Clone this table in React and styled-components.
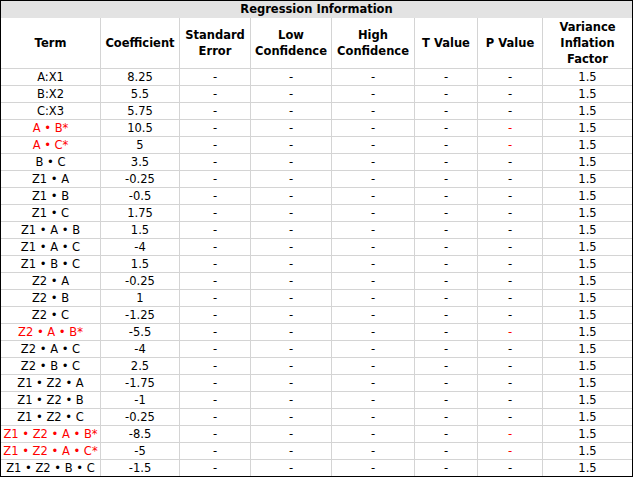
import React from 'react'
import styled, { createGlobalStyle } from 'styled-components'

const GlobalStyle = createGlobalStyle`
  body {
    margin: 0;
    background: #fff;
  }
`

const Frame = styled.div`
  width: 633px;
  height: 477px;
  box-sizing: border-box;
  border: 1px solid #000;
  background: #fff;
  font-family: 'DejaVu Sans', Tahoma, sans-serif;
  font-size: 11.5px;
  color: #000;
`

const Title = styled.div`
  height: 17px;
  line-height: 17px;
  background: #e3e3e3;
  text-align: center;
  font-weight: bold;
`

const Grid = styled.div`
  display: grid;
  grid-template-columns: 100px 79px 71px 81px 83px 63px 65px 89px;
  grid-template-rows: 51px repeat(23, 17px) 16px;
`

const Cell = styled.div`
  box-sizing: border-box;
  display: flex;
  align-items: center;
  justify-content: center;
  text-align: center;
  border-right: ${p => (p.$lastCol ? 'none' : '1px solid #d4d4d4')};
  border-bottom: ${p => (p.$lastRow ? 'none' : '1px solid #d4d4d4')};
  color: ${p => (p.$red ? '#ff0000' : '#000')};
  white-space: nowrap;
`

const HeadCell = styled(Cell)`
  font-weight: bold;
  line-height: 16px;
  white-space: normal;
`

const headers = [
  'Term',
  'Coefficient',
  'Standard\nError',
  'Low\nConfidence',
  'High\nConfidence',
  'T Value',
  'P Value',
  'Variance\nInflation\nFactor',
]

// [term, coefficient, significant]
const rows = [
  ['A:X1', '8.25'],
  ['B:X2', '5.5'],
  ['C:X3', '5.75'],
  ['A • B*', '10.5', true],
  ['A • C*', '5', true],
  ['B • C', '3.5'],
  ['Z1 • A', '-0.25'],
  ['Z1 • B', '-0.5'],
  ['Z1 • C', '1.75'],
  ['Z1 • A • B', '1.5'],
  ['Z1 • A • C', '-4'],
  ['Z1 • B • C', '1.5'],
  ['Z2 • A', '-0.25'],
  ['Z2 • B', '1'],
  ['Z2 • C', '-1.25'],
  ['Z2 • A • B*', '-5.5', true],
  ['Z2 • A • C', '-4'],
  ['Z2 • B • C', '2.5'],
  ['Z1 • Z2 • A', '-1.75'],
  ['Z1 • Z2 • B', '-1'],
  ['Z1 • Z2 • C', '-0.25'],
  ['Z1 • Z2 • A • B*', '-8.5', true],
  ['Z1 • Z2 • A • C*', '-5', true],
  ['Z1 • Z2 • B • C', '-1.5'],
]

const App = () => {
  return (
    <>
      <GlobalStyle />
      <Frame>
        <Title>Regression Information</Title>
        <Grid>
          {headers.map((h, i) => (
            <HeadCell key={h} $lastCol={i === headers.length - 1}>
              <span>
                {h.split('\n').map((line, j) => (
                  <div key={j}>{line}</div>
                ))}
              </span>
            </HeadCell>
          ))}
          {rows.map(([term, coef, sig], r) => {
            const last = r === rows.length - 1
            const cells = [term, coef, '-', '-', '-', '-', '-', '1.5']
            return cells.map((v, c) => (
              <Cell
                key={r + '-' + c}
                $lastRow={last}
                $lastCol={c === 7}
                $red={sig && (c === 0 || c === 6)}
              >
                {v}
              </Cell>
            ))
          })}
        </Grid>
      </Frame>
    </>
  )
}

export default App
